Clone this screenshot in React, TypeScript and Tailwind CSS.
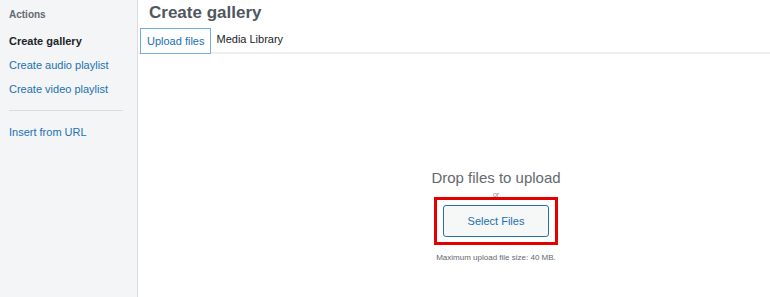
export default function App() {
    return (
        <div className="flex w-[770px] h-[297px] bg-white overflow-hidden" style={{ fontFamily: '"Liberation Sans", Arial, sans-serif' }}>
            {/* Sidebar */}
            <div className="w-[138px] h-full shrink-0 bg-[#f3f5f6] border-r border-[#dcdcde] pt-[9px] px-[9px]">
                <div className="text-[10px] font-bold text-[#646970] leading-[12px]">Actions</div>
                <div className="mt-[13px] text-[11px] font-semibold text-[#1d2327] leading-[14px]">Create gallery</div>
                <div className="mt-[10px] text-[11px] text-[#2271b1] leading-[14px]">Create audio playlist</div>
                <div className="mt-[10px] text-[11px] text-[#2271b1] leading-[14px]">Create video playlist</div>
                <div className="mt-[14px] mr-[5px] border-t border-[#dcdcde]"></div>
                <div className="mt-[14px] text-[11px] text-[#2271b1] leading-[14px]">Insert from URL</div>
            </div>

            {/* Main */}
            <div className="flex-1 flex flex-col min-w-0">
                <div className="px-[11px] pt-[3px] h-[27px]">
                    <h1 className="text-[17px] font-bold text-[#50575e] leading-[20px]">Create gallery</h1>
                </div>
                <div className="flex items-end h-[27px] pl-[2px] border-b-2 border-[#efefef]">
                    <div className="h-[26px] px-[6px] flex items-center border border-[#72aee6] text-[11px] text-[#2271b1] bg-white -mb-[2px]">Upload files</div>
                    <div className="h-[26px] px-[5px] flex items-center text-[11px] text-[#1d2327]">Media Library</div>
                </div>
                <div className="flex-1 overflow-hidden">
                    <div className="w-[716px] flex flex-col items-center pt-[115px]">
                        <div className="text-[15px] text-[#646970] leading-[18px]">Drop files to upload</div>
                        <div className="text-[7px] text-[#8c8f94] leading-[8px] mt-[4px]">or</div>
                        <div className="relative border-[3px] border-[#e50000] px-[6px] py-[5px] -mt-[2px]">
                            <div className="w-[106px] h-[32px] flex items-center justify-center bg-[#f6f7f7] border border-[#2271b1] rounded-[3px] text-[11px] text-[#2271b1]">Select Files</div>
                        </div>
                        <div className="mt-[8px] text-[8px] text-[#646970] leading-[10px]">Maximum upload file size: 40 MB.</div>
                    </div>
                </div>
            </div>
        </div>
    )
}
